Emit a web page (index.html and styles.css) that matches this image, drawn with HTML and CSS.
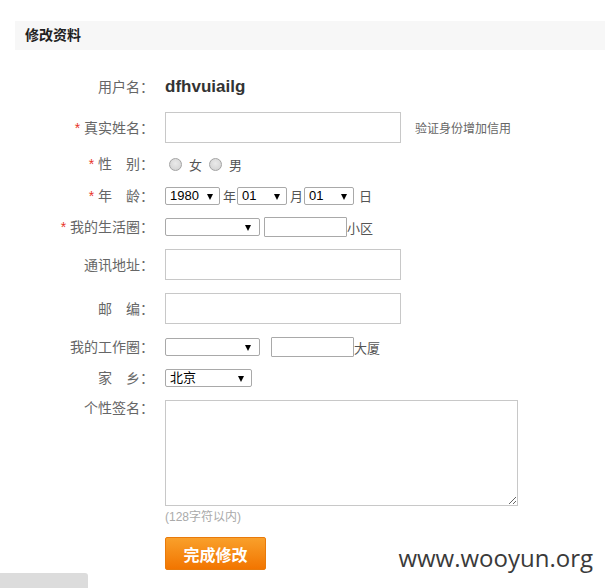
FILE: index.html
```html
<!DOCTYPE html>
<html lang="zh-CN">
<head>
  <meta charset="UTF-8">
  <title>修改资料</title>
  <link rel="stylesheet" href="styles.css">
</head>
<body>

  <div class="panel-head">修改资料</div>

  <form class="profile" action="#">
    <div class="row row-user">
      <label class="lbl">用户名：</label>
      <span class="uname">dfhvuiailg</span>
    </div>

    <div class="row row-name">
      <label class="lbl"><em>*</em> 真实姓名：</label>
      <input type="text" class="txt">
      <span class="tip">验证身份增加信用</span>
    </div>

    <div class="row row-gender">
      <label class="lbl"><em>*</em> 性　别：</label>
      <input type="radio" name="sex" class="radio first"><span class="opt">女</span>
      <input type="radio" name="sex" class="radio"><span class="opt">男</span>
    </div>

    <div class="row row-age">
      <label class="lbl"><em>*</em> 年　龄：</label>
      <span class="sel w-year"><select><option>1980</option></select></span>
      <span class="unit">年</span>
      <span class="sel w-md"><select><option>01</option></select></span>
      <span class="unit">月</span>
      <span class="sel w-md"><select><option>01</option></select></span>
      <span class="unit u-day">日</span>
    </div>

    <div class="row row-life">
      <label class="lbl"><em>*</em> 我的生活圈：</label>
      <span class="sel w-area"><select><option></option></select></span>
      <input type="text" class="small life">
      <span class="unit u-tail">小区</span>
    </div>

    <div class="row row-addr">
      <label class="lbl">通讯地址：</label>
      <input type="text" class="txt">
    </div>

    <div class="row row-zip">
      <label class="lbl">邮　编：</label>
      <input type="text" class="txt">
    </div>

    <div class="row row-work">
      <label class="lbl">我的工作圈：</label>
      <span class="sel w-area"><select><option></option></select></span>
      <input type="text" class="small work">
      <span class="unit u-tail">大厦</span>
    </div>

    <div class="row row-home">
      <label class="lbl">家　乡：</label>
      <span class="sel w-home"><select><option>北京</option></select></span>
    </div>

    <div class="row row-sign">
      <label class="lbl">个性签名：</label>
      <textarea class="sign"></textarea>
    </div>

    <p class="hint">(128字符以内)</p>

    <div class="actions">
      <button type="button" class="btn-save">完成修改</button>
    </div>
  </form>

  <div class="watermark">www.wooyun.org</div>
  <div class="corner-tab"></div>

</body>
</html>
```

FILE: styles.css
```css
body {
  margin: 0;
  background: #fff;
  font-family: "Liberation Sans", "Noto Sans CJK SC", sans-serif;
  color: #666;
  font-size: 14px;
}

.panel-head {
  margin: 21px 0 0 15px;
  height: 29px;
  line-height: 29px;
  padding-left: 10px;
  background: #f7f7f7;
  color: #222;
  font-size: 14px;
  font-weight: bold;
}

.profile {
  margin: 0;
}

.row {
  display: flex;
  align-items: center;
  margin-top: 12px;
}

.lbl {
  width: 154px;
  flex: none;
  text-align: right;
  margin-right: 11px;
  line-height: 16px;
  color: #666;
}

.lbl em {
  font-style: normal;
  color: #e8332a;
}

.row-user {
  margin-top: 22px;
  height: 30px;
}

.uname {
  font-size: 17px;
  font-weight: bold;
  color: #333;
}

.row-name {
  margin-top: 10px;
}

.txt {
  width: 236px;
  height: 31px;
  box-sizing: border-box;
  border: 1px solid #c8c8c8;
  margin: 0;
  padding: 0 6px;
}

.tip {
  margin-left: 14px;
  font-size: 12px;
  color: #666;
}

.row-gender {
  height: 20px;
  margin-top: 11px;
}

.radio {
  appearance: none;
  -webkit-appearance: none;
  width: 13px;
  height: 13px;
  margin: 0 0 0 7px;
  border: 1px solid #a3a3a3;
  border-radius: 50%;
  background: radial-gradient(circle at 50% 40%, #eaeaea, #cfcfcf);
  box-sizing: border-box;
}

.radio.first {
  margin-left: 4px;
}

.opt {
  margin-left: 7px;
  font-size: 13px;
  color: #555;
}

.sel {
  position: relative;
  display: inline-block;
  flex: none;
}

.sel select {
  appearance: none;
  -webkit-appearance: none;
  display: block;
  width: 100%;
  height: 18px;
  box-sizing: border-box;
  border: 1px solid #a9a9a9;
  border-radius: 2px;
  background: #fff;
  margin: 0;
  padding: 0 0 0 4px;
  font-family: "Liberation Sans", "Noto Sans CJK SC", sans-serif;
  font-size: 13px;
  line-height: 16px;
  color: #000;
}

.sel::after {
  content: "";
  position: absolute;
  top: 7px;
  right: 7px;
  border-left: 3.5px solid transparent;
  border-right: 3.5px solid transparent;
  border-top: 6px solid #000;
}

.w-year { width: 55px; }
.w-md { width: 50px; }
.w-area { width: 95px; }
.w-home { width: 87px; }

.w-area::after { right: 9px; }
.w-home::after { right: 8px; }

.unit {
  font-size: 13px;
  color: #555;
  margin: 0 1px 0 3px;
}

.u-day {
  margin-left: 5px;
}

.u-tail {
  margin: 0;
}

.small {
  height: 20px;
  width: 83px;
  box-sizing: border-box;
  border: 1px solid #a9a9a9;
  border-radius: 1px;
  margin: 0;
  padding: 0 3px;
}

.small.life { margin-left: 4px; }
.small.work { margin-left: 11px; }

.row-life, .row-work {
  height: 20px;
}

.row-zip, .row-work, .row-sign {
  margin-top: 13px;
}

.row-sign {
  align-items: flex-start;
}

.sign {
  width: 353px;
  height: 106px;
  box-sizing: border-box;
  border: 1px solid #c8c8c8;
  margin: 0;
  padding: 4px;
}

.hint {
  margin: 2px 0 0 165px;
  font-size: 12px;
  line-height: 18px;
  color: #aaa;
}

.actions {
  margin: 11px 0 0 165px;
}

.btn-save {
  width: 101px;
  height: 33px;
  border: 1px solid #e97a0a;
  border-radius: 2px;
  background: linear-gradient(#f9a02b, #f27500);
  color: #fff;
  font-family: "Noto Sans CJK SC", sans-serif;
  font-size: 16px;
  font-weight: bold;
  padding: 0;
}

.watermark {
  position: absolute;
  right: 12px;
  top: 546px;
  font-family: "Open Sans", sans-serif;
  font-size: 24px;
  line-height: 24px;
  color: #3a3a3a;
}

.corner-tab {
  position: fixed;
  left: 0;
  bottom: 0;
  width: 88px;
  height: 15px;
  background: #dcdcdc;
  border-radius: 0 3px 0 0;
}
```
